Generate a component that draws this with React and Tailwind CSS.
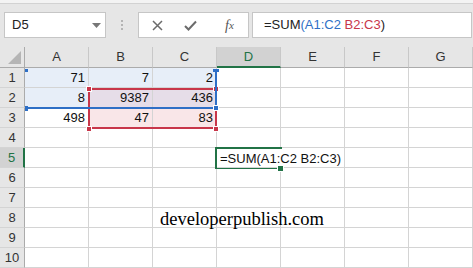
import React from 'react';

const cols = ['A', 'B', 'C', 'D', 'E', 'F', 'G'];

const values = {
  1: { A: '71', B: '7', C: '2' },
  2: { A: '8', B: '9387', C: '436' },
  3: { A: '498', B: '47', C: '83' },
};

const fills = {
  A1: 'bg-[#e7eef8]',
  B1: 'bg-[#e7eef8]',
  C1: 'bg-[#e7eef8]',
  A2: 'bg-[#e7eef8]',
  B2: 'bg-[#e6dde8]',
  C2: 'bg-[#e6dde8]',
  B3: 'bg-[#f9e6e8]',
  C3: 'bg-[#f9e6e8]',
};

const Toolbar = () => (
  <div>
    <div className="h-[4px] border-b border-[#d2d2d2] bg-[#f3f3f3]" />
    <div className="flex h-[43px] items-start bg-[#e6e6e6] pl-[4px] pt-[8px]">
      <div className="flex h-[26px] w-[102px] items-center justify-between border border-[#c6c6c6] bg-white pl-[7px] pr-[4px] text-[13px] text-[#222]">
        <span>D5</span>
        <svg width="9" height="5" viewBox="0 0 9 5">
          <path d="M0 0 L9 0 L4.5 5 Z" fill="#777" />
        </svg>
      </div>
      <div className="flex h-[26px] w-[32px] flex-col items-center justify-center gap-[2px]">
        <span className="h-[2px] w-[2px] bg-[#b4b4b4]" />
        <span className="h-[2px] w-[2px] bg-[#b4b4b4]" />
        <span className="h-[2px] w-[2px] bg-[#b4b4b4]" />
      </div>
      <div className="flex h-[26px] w-[111px] items-center border border-[#c6c6c6] bg-white">
        <div className="flex w-[36px] justify-center">
          <svg width="11" height="11" viewBox="0 0 11 11">
            <path d="M1 1 L10 10 M10 1 L1 10" stroke="#6b6b6b" strokeWidth="1.5" />
          </svg>
        </div>
        <div className="flex w-[30px] justify-center">
          <svg width="13" height="11" viewBox="0 0 13 11">
            <path d="M1 6 L4.5 9.5 L12 1.5" stroke="#6b6b6b" strokeWidth="2" fill="none" />
          </svg>
        </div>
        <div className="flex flex-1 justify-center pl-[6px] font-['Liberation_Serif',serif] text-[14px] italic text-[#555]">
          <span>f</span>
          <span className="text-[11px] leading-[20px]">x</span>
        </div>
      </div>
      <div className="ml-[3px] mr-[1px] flex h-[26px] flex-1 items-center border border-[#c6c6c6] bg-white pl-[11px] text-[13px] text-[#222]">
        <span>=SUM</span>
        <span className="text-[#2e6fc6]">(A1:C2</span>
        <span className="text-[#c8364a]">&nbsp;B2:C3</span>
        <span>)</span>
      </div>
    </div>
  </div>
);

const HeaderRow = () => (
  <div className="flex h-[21px]">
    <div className="relative w-[25px] border-b border-r border-[#ababab] bg-[#e6e6e6]">
      <svg className="absolute bottom-[3px] right-[3px]" width="13" height="13" viewBox="0 0 13 13">
        <path d="M13 0 L13 13 L0 13 Z" fill="#b5b5b5" />
      </svg>
    </div>
    {cols.map((c) =>
      c === 'D' ? (
        <div
          key={c}
          className="flex w-[64px] items-center justify-center border-b-2 border-r border-b-[#217346] border-r-[#c8c8c8] bg-[#d2d2d2] pt-[1px] text-[13px] text-[#217346]"
        >
          {c}
        </div>
      ) : (
        <div
          key={c}
          className="flex w-[64px] items-center justify-center border-b border-r border-b-[#ababab] border-r-[#c8c8c8] bg-[#e6e6e6] text-[13px] text-[#333]"
        >
          {c}
        </div>
      )
    )}
  </div>
);

const DataRow = ({ n }) => (
  <div className="flex h-[20px]">
    {n === 5 ? (
      <div className="flex w-[25px] items-center justify-center border-b border-r-2 border-b-[#d4d4d4] border-r-[#217346] bg-[#d2d2d2] text-[13px] text-[#217346]">
        {n}
      </div>
    ) : (
      <div className="flex w-[25px] items-center justify-center border-b border-r border-b-[#d4d4d4] border-r-[#ababab] bg-[#e6e6e6] text-[13px] text-[#333]">
        {n}
      </div>
    )}
    {cols.map((c) => {
      const v = values[n]?.[c];
      const fill = fills[c + n] || '';
      if (n === 5 && c === 'D') {
        return (
          <div key={c} className="relative z-10 flex w-[64px] items-center whitespace-nowrap border-b border-r border-b-[#d4d4d4] border-r-transparent pl-[3px] pt-[2px] text-[13px] text-[#111]">
            =SUM(A1:C2 B2:C3)
          </div>
        );
      }
      return (
        <div key={c} className={`flex w-[64px] items-center justify-end border-b border-r border-[#d4d4d4] pr-[3px] text-[13px] text-[#111] ${fill}`}>
          {v}
        </div>
      );
    })}
  </div>
);

export default function App() {
  const rows = [1, 2, 3, 4, 5, 6, 7, 8, 9, 10];
  return (
    <div className="relative h-[268px] w-[473px] overflow-hidden bg-white font-['Liberation_Sans',Arial,sans-serif]">
      <Toolbar />
      <HeaderRow />
      {rows.map((n) => (
        <DataRow key={n} n={n} />
      ))}

      {/* B2:C3 reference box */}
      <div className="absolute left-[88px] top-[88px] h-[41px] w-[129px] border-2 border-[#c8364a]" />
      <div className="absolute left-[86px] top-[86px] h-[6px] w-[6px] border border-white bg-[#c8364a]" />
      <div className="absolute left-[213px] top-[86px] h-[6px] w-[6px] border border-white bg-[#c8364a]" />
      <div className="absolute left-[86px] top-[126px] h-[6px] w-[6px] border border-white bg-[#c8364a]" />
      <div className="absolute left-[213px] top-[126px] h-[6px] w-[6px] border border-white bg-[#c8364a]" />

      {/* A1:C2 reference box */}
      <div className="absolute left-[25px] top-[107px] h-[2px] w-[192px] bg-[#2e6fc6]" />
      <div className="absolute left-[215px] top-[69px] h-[40px] w-[2px] bg-[#2e6fc6]" />
      <div className="absolute left-[25px] top-[69px] h-[3px] w-[3px] bg-[#2e6fc6]" />
      <div className="absolute left-[25px] top-[106px] h-[5px] w-[3px] bg-[#2e6fc6]" />
      <div className="absolute left-[213px] top-[69px] h-[3px] w-[6px] bg-[#2e6fc6]" />
      <div className="absolute left-[213px] top-[105px] h-[6px] w-[6px] border border-white bg-[#2e6fc6]" />

      {/* active cell D5 */}
      <div className="absolute left-[215px] top-[147px] h-[22px] w-[67px] border-2 border-r-0 border-[#217346]" />
      <div className="absolute left-[277px] top-[165px] z-20 h-[7px] w-[7px] border border-white bg-[#217346]" />

      <div className="absolute left-[160px] top-[206px] font-['Liberation_Serif',serif] text-[18.5px] text-black">
        developerpublish.com
      </div>
    </div>
  );
}
